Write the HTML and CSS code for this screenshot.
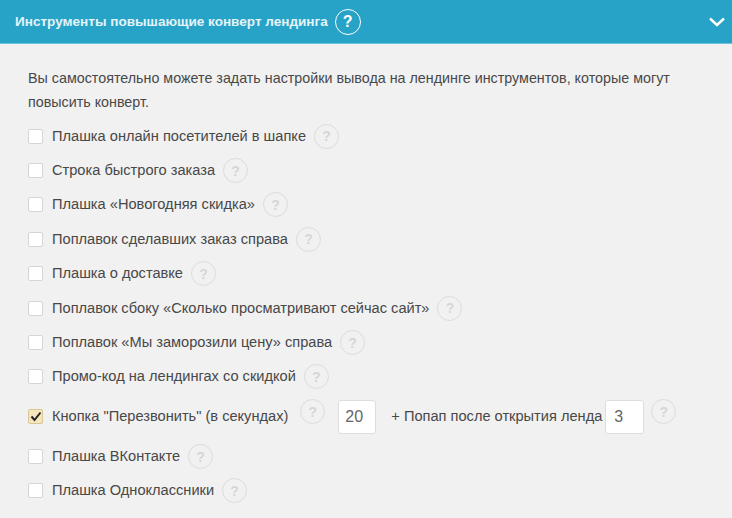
FILE: index.html
```html
<!DOCTYPE html>
<html lang="ru">
<head>
<meta charset="utf-8">
<title>Инструменты</title>
<link rel="stylesheet" href="styles.css">
</head>
<body>
<header class="head">
  <span class="head-title">Инструменты повышающие конверт лендинга</span>
  <span class="q q-head">?</span>
  <svg class="chev" width="18" height="12" viewBox="0 0 18 12"><path d="M2 2.5 L9 9 L16 2.5" fill="none" stroke="#fff" stroke-width="2.4"/></svg>
</header>
<main class="body">
  <p class="intro">Вы самостоятельно можете задать настройки вывода на лендинге инструментов, которые могут повысить конверт.</p>
  <div class="row"><span class="cb"></span><span class="lbl">Плашка онлайн посетителей в шапке</span><span class="q">?</span></div>
  <div class="row"><span class="cb"></span><span class="lbl">Строка быстрого заказа</span><span class="q">?</span></div>
  <div class="row"><span class="cb"></span><span class="lbl">Плашка «Новогодняя скидка»</span><span class="q">?</span></div>
  <div class="row"><span class="cb"></span><span class="lbl">Поплавок сделавших заказ справа</span><span class="q">?</span></div>
  <div class="row"><span class="cb"></span><span class="lbl">Плашка о доставке</span><span class="q">?</span></div>
  <div class="row"><span class="cb"></span><span class="lbl">Поплавок сбоку «Сколько просматривают сейчас сайт»</span><span class="q">?</span></div>
  <div class="row"><span class="cb"></span><span class="lbl">Поплавок «Мы заморозили цену» справа</span><span class="q">?</span></div>
  <div class="row"><span class="cb"></span><span class="lbl">Промо-код на лендингах со скидкой</span><span class="q">?</span></div>
  <div class="row row-input">
    <span class="cb cb-on"><svg width="12" height="11" viewBox="0 0 12 11"><path d="M1.5 5.5 L4.5 9 L10.5 1.5" fill="none" stroke="#222" stroke-width="2"/></svg></span>
    <span class="lbl">Кнопка "Перезвонить" (в секундах)</span>
    <span class="q q-up q-a">?</span>
    <input class="num num-a" type="text" value="20">
    <span class="lbl lbl-b">+ Попап после открытия ленда</span>
    <input class="num num-b" type="text" value="3">
    <span class="q q-up q-b">?</span>
  </div>
  <div class="row"><span class="cb"></span><span class="lbl">Плашка ВКонтакте</span><span class="q">?</span></div>
  <div class="row"><span class="cb"></span><span class="lbl">Плашка Одноклассники</span><span class="q">?</span></div>
</main>
</body>
</html>
```

FILE: styles.css
```css
* { box-sizing: border-box; }
html, body { margin: 0; padding: 0; }
body {
  width: 732px;
  height: 518px;
  overflow: hidden;
  background: #f1f1f1;
  font-family: "Liberation Sans", Arial, sans-serif;
  font-size: 14.3px;
  color: #484848;
}
.head {
  height: 44px;
  background: #27a3c8;
  border-bottom: 1px solid #6cc3dc;
  display: flex;
  align-items: center;
  padding: 0 15px;
  color: #fff;
}
.head-title { font-weight: 700; font-size: 13.56px; color: #e4f4f9; }
.lbl { font-size: 14.62px; margin-top: -1px; }
.q {
  flex: none;
  width: 25px;
  height: 25px;
  border: 1.5px solid #dcdcdc;
  border-radius: 50%;
  margin-left: 8px;
  display: flex;
  align-items: center;
  justify-content: center;
  color: #d6d6d6;
  font-weight: 700;
  font-size: 14px;
}
.q-head { border-color: #fff; color: #fff; width: 26px; height: 26px; margin-left: 7px; font-size: 16px; }
.chev { margin-left: auto; margin-right: -9px; }
.body { padding: 22px 28px 0; }
.intro { margin: 0 0 5px; line-height: 24px; width: 676px; }
.row { display: flex; align-items: center; height: 34.4px; }
.cb {
  flex: none;
  width: 15px;
  height: 15px;
  border: 1px solid #d5d5d5;
  border-radius: 2px;
  background: #fff;
  margin-right: 9px;
  display: flex;
  align-items: center;
  justify-content: center;
}
.cb-on { background: #f6e6bd; border-color: #d8c694; }
.row-input { height: 45.2px; }
.q-up { align-self: flex-start; margin-top: 5px; }
.q-a { margin-left: 12px; }
.q-b { margin-left: 7px; }
.num {
  flex: none;
  height: 34px;
  width: 38px;
  border: 1px solid #dedede;
  border-radius: 3px;
  background: #fff;
  font: 16px "Liberation Sans", sans-serif;
  color: #666;
  padding: 0 6px;
}
.num-a { margin-left: 13px; }
.num-b { margin-left: 3px; width: 39px; padding: 0 8px; }
.lbl-b { margin-left: 15px; }
```
